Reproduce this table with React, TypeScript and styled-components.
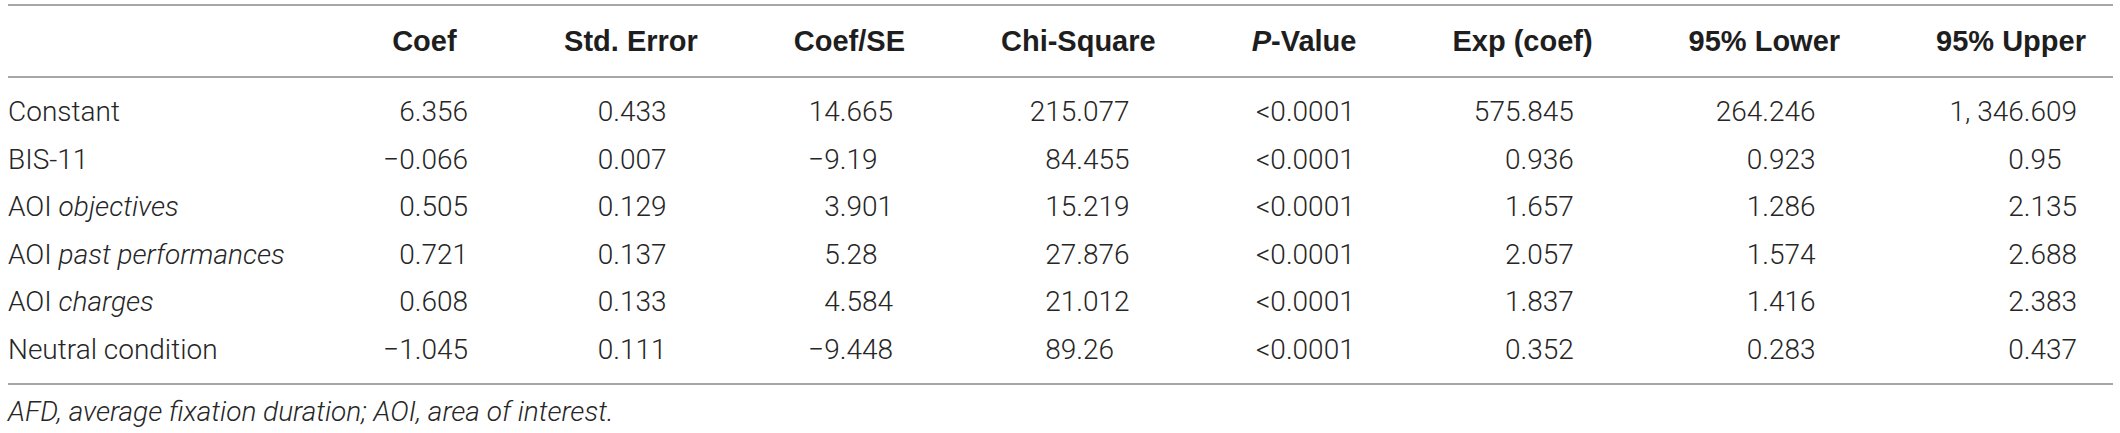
import React from "react";
import styled, { createGlobalStyle } from "styled-components";

const Global = createGlobalStyle`
  html, body { margin: 0; padding: 0; background: #ffffff; }
  body { font-family: Roboto, "Liberation Sans", Arial, sans-serif; color: #262626; }
`;

const Page = styled.div`
  width: 2120px;
  box-sizing: border-box;
  padding: 4px 7px 0 8px;
`;

const Table = styled.div`
  display: grid;
  grid-template-columns: repeat(9, max-content);
  justify-content: space-between;
  border-top: 2px solid #a6a6a6;
  border-bottom: 2px solid #a6a6a6;
  padding-bottom: 10px;
`;

const Row = styled.div`
  display: contents;
  & > :last-child {
    padding-right: 27px;
  }
`;

const HeadCell = styled.div<{ $left?: boolean }>`
  height: 70px;
  display: flex;
  align-items: center;
  justify-content: ${(p) => (p.$left ? "flex-start" : "center")};
  font-family: "Liberation Sans", Arial, sans-serif;
  font-weight: 700;
  font-size: 29px;
  color: #1e1e1e;
  white-space: nowrap;
`;

const HeadRule = styled.div`
  grid-column: 1 / -1;
  height: 2px;
  background: #a6a6a6;
  margin-bottom: 10px;
`;

const LabelCell = styled.div`
  height: 47.5px;
  display: flex;
  align-items: center;
  font-weight: 300;
  font-size: 28px;
  white-space: pre;
`;

const NumCell = styled.div`
  height: 47.5px;
  display: flex;
  align-items: center;
  justify-content: center;
`;

const Num = styled.span<{ $w: number; $pad?: number }>`
  display: inline-block;
  box-sizing: border-box;
  width: ${(p) => p.$w}em;
  padding-right: ${(p) => p.$pad ?? 0}ch;
  text-align: right;
  font-weight: 300;
  font-size: 28px;
  white-space: nowrap;
`;

const Footnote = styled.p`
  margin: 9px 0 0 0;
  font-style: italic;
  font-weight: 300;
  font-size: 28px;
  line-height: 36px;
  color: #262626;
`;

type Val = string | [string, number];

const widths = [3.12, 2.55, 3.12, 3.66, 3.62, 3.66, 3.66, 4.72];

const headers: React.ReactNode[] = [
  "Coef",
  "Std. Error",
  "Coef/SE",
  "Chi-Square",
  <>
    <i>P</i>-Value
  </>,
  "Exp (coef)",
  "95% Lower",
  "95% Upper",
];

const rows: { label: React.ReactNode; values: Val[] }[] = [
  {
    label: "Constant",
    values: ["6.356", "0.433", "14.665", "215.077", "<0.0001", "575.845", "264.246", "1, 346.609"],
  },
  {
    label: "BIS-11",
    values: ["\u22120.066", "0.007", ["\u22129.19", 1], "84.455", "<0.0001", "0.936", "0.923", ["0.95", 1]],
  },
  {
    label: (
      <>
        AOI <i>objectives</i>
      </>
    ),
    values: ["0.505", "0.129", "3.901", "15.219", "<0.0001", "1.657", "1.286", "2.135"],
  },
  {
    label: (
      <>
        AOI <i>past performances</i>
      </>
    ),
    values: ["0.721", "0.137", ["5.28", 1], "27.876", "<0.0001", "2.057", "1.574", "2.688"],
  },
  {
    label: (
      <>
        AOI <i>charges</i>
      </>
    ),
    values: ["0.608", "0.133", "4.584", "21.012", "<0.0001", "1.837", "1.416", "2.383"],
  },
  {
    label: "Neutral condition",
    values: ["\u22121.045", "0.111", "\u22129.448", ["89.26", 1], "<0.0001", "0.352", "0.283", "0.437"],
  },
];

export default function App() {
  return (
    <>
      <Global />
      <Page>
        <Table>
          <Row>
            <HeadCell $left />
            {headers.map((h, i) => (
              <HeadCell key={i}>{h}</HeadCell>
            ))}
          </Row>
          <HeadRule />
          {rows.map((r, ri) => (
            <Row key={ri}>
              <LabelCell>{r.label}</LabelCell>
              {r.values.map((v, ci) => {
                const [text, pad] = typeof v === "string" ? [v, 0] : v;
                return (
                  <NumCell key={ci}>
                    <Num $w={widths[ci]} $pad={pad}>
                      {text}
                    </Num>
                  </NumCell>
                );
              })}
            </Row>
          ))}
        </Table>
        <Footnote>AFD, average fixation duration; AOI, area of interest.</Footnote>
      </Page>
    </>
  );
}
